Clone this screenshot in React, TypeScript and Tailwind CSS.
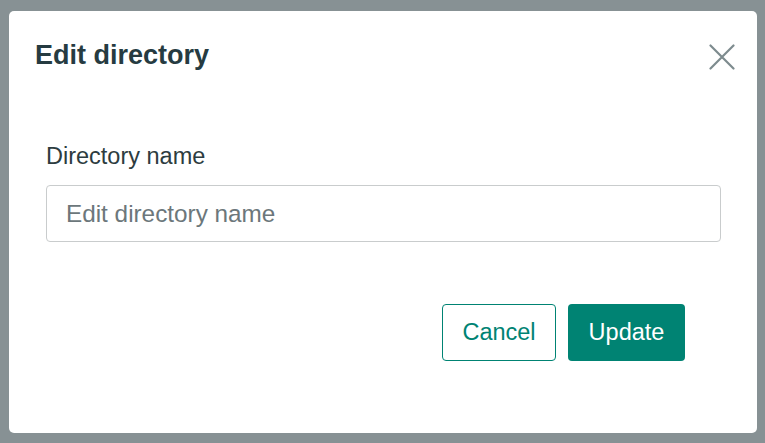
import React from 'react';

const App: React.FC = () => {
  return (
    <div className="w-[765px] h-[443px] bg-[#879194] pt-[11px] pl-[9px] font-['Liberation_Sans',Arial,sans-serif]">
      <div className="w-[748px] h-[422px] bg-white rounded-[5px] flex flex-col">
        {/* Header */}
        <div className="flex items-start justify-between pt-[28px] pl-[26px] pr-[22px]">
          <h1 className="text-[27px] leading-[32px] font-bold text-[#263b41]">Edit directory</h1>
          <button className="mt-[5px] text-[#7d8b8e]" aria-label="Close">
            <svg width="26" height="26" viewBox="0 0 26 26" fill="none" stroke="currentColor" strokeWidth="2.2" strokeLinecap="round">
              <path d="M1.5 1.5 L24.5 24.5 M24.5 1.5 L1.5 24.5" />
            </svg>
          </button>
        </div>

        {/* Body */}
        <div className="pl-[37px] pr-[36px] pt-[71px]">
          <label className="block text-[23.5px] leading-[28px] text-[#2d3c40]">Directory name</label>
          <input
            type="text"
            placeholder="Edit directory name"
            className="mt-[15px] w-full h-[57px] border border-[#c9cccd] rounded-[4px] px-[19px] text-[24.3px] text-[#2d3c40] placeholder:text-[#6c777b] outline-none"
          />
          <div className="flex justify-end gap-[12px] mt-[62px] pr-[36px]">
            <button className="w-[114px] h-[57px] border border-[#008373] rounded-[4px] text-[23.5px] text-[#008373] bg-white">Cancel</button>
            <button className="w-[117px] h-[57px] rounded-[4px] text-[23.5px] text-white bg-[#008373]">Update</button>
          </div>
        </div>
      </div>
    </div>
  );
};

export default App;
